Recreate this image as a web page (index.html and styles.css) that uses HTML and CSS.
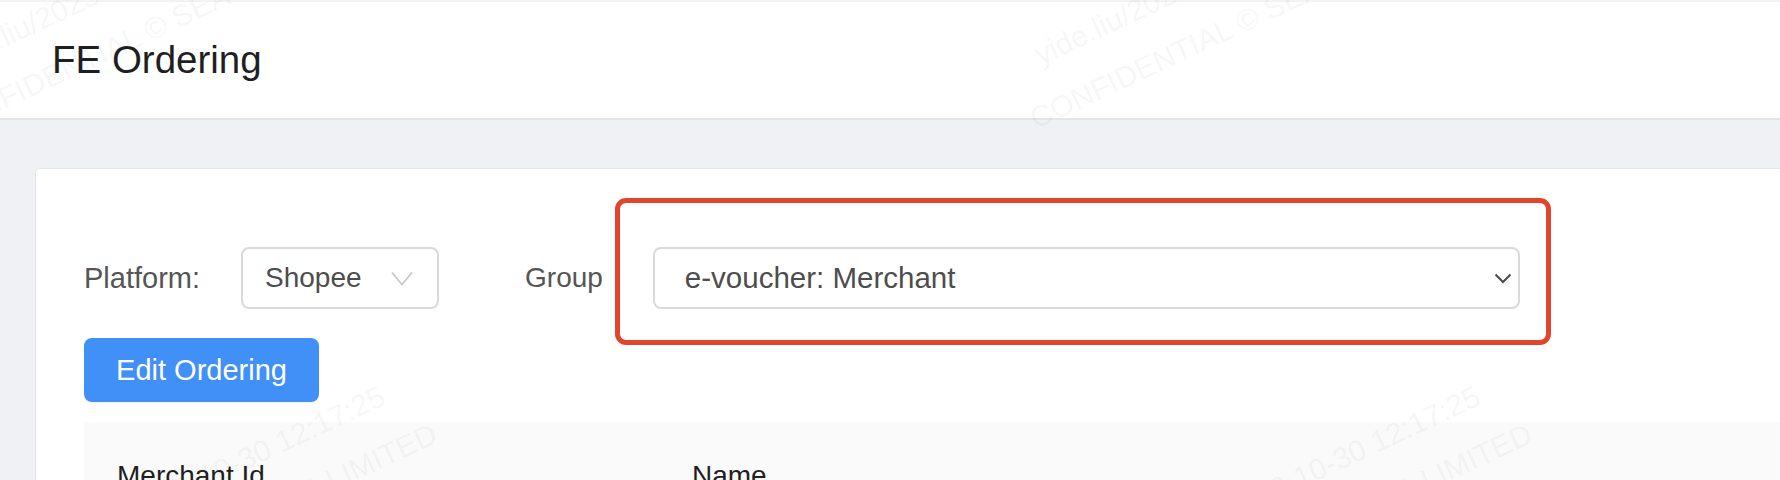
FILE: index.html
```html
<!DOCTYPE html>
<html lang="en">
<head>
  <meta charset="UTF-8" />
  <title>FE Ordering</title>
  <link rel="stylesheet" href="styles.css">
</head>
<body>
  <div class="header">
    <h1>FE Ordering</h1>
  </div>
  <div class="main">
    <div class="card">
      <div class="filters">
        <label class="filter-label">Platform:</label>
        <div class="select select-small">
          <span>Shopee</span>
          <svg class="arrow-light" width="22" height="15" viewBox="0 0 22 15"><path d="M1 1.5 L11 13.5 L21 1.5" fill="none" stroke="#c4c4c4" stroke-width="1.6"/></svg>
        </div>
        <label class="filter-label group-label">Group</label>
        <div class="group-field">
          <div class="select select-wide">
            <span>e-voucher: Merchant</span>
            <svg class="arrow-dark" width="18" height="11" viewBox="0 0 18 11"><path d="M1.5 1.5 L9 9 L16.5 1.5" fill="none" stroke="#4a4a4a" stroke-width="2"/></svg>
          </div>
          <div class="highlight"></div>
        </div>
      </div>
      <button class="btn-primary">Edit Ordering</button>
      <table class="list">
        <thead>
          <tr>
            <th class="col-id">Merchant Id</th>
            <th>Name</th>
          </tr>
        </thead>
      </table>
    </div>
  </div>

  <div class="watermarks">
    <div class="wm wm-1">yide.liu/2023-10-30 12:17:25<br>CONFIDENTIAL © SEA LIMITED</div>
    <div class="wm wm-2">yide.liu/2023-10-30 12:17:25<br>CONFIDENTIAL © SEA LIMITED</div>
    <div class="wm wm-3">yide.liu/2023-10-30 12:17:25<br>CONFIDENTIAL © SEA LIMITED</div>
    <div class="wm wm-4">yide.liu/2023-10-30 12:17:25<br>CONFIDENTIAL © SEA LIMITED</div>
  </div>
</body>
</html>
```

FILE: styles.css
```css
body {
  margin: 0;
  font-family: "Liberation Sans", Arial, sans-serif;
  background-color: #f0f1f4;
  overflow: hidden;
  height: 480px;
  position: relative;
}
.header {
  height: 116px;
  background-color: #fff;
  border-top: 2px solid #f3f3f3;
  border-bottom: 2px solid #e4e5e7;
  display: flex;
  align-items: center;
  padding-left: 52px;
}
.header h1 {
  margin: 0;
  font-size: 38.5px;
  font-weight: normal;
  color: #1f1f1f;
}
.main {
  padding: 48px 0 0 35px;
}
.card {
  width: 1800px;
  background-color: #fff;
  border: 1px solid #e6e7e9;
  border-radius: 5px;
  padding: 78px 0 40px 48px;
}
.filters {
  display: flex;
  align-items: center;
  height: 62px;
}
.filter-label {
  font-size: 29px;
  color: #555;
  margin-right: 41px;
}
.group-label {
  font-size: 28px;
  margin-left: 86px;
  margin-right: 50px;
}
.select {
  box-sizing: border-box;
  height: 62px;
  border: 2px solid #dadada;
  border-radius: 8px;
  display: flex;
  align-items: center;
  justify-content: space-between;
  color: #4d4d4d;
}
.select-small {
  width: 198px;
  padding: 0 24px 0 22px;
  font-size: 28px;
}
.select-wide {
  width: 867px;
  padding: 0 6px 0 30px;
  font-size: 29.5px;
}
.group-field {
  position: relative;
}
.highlight {
  position: absolute;
  left: -38px;
  right: -31px;
  top: -49px;
  bottom: -36px;
  border: 5px solid #e4432c;
  border-radius: 11px;
}
.btn-primary {
  margin-top: 29px;
  width: 235px;
  height: 64px;
  border: none;
  border-radius: 8px;
  background-color: #4090f7;
  color: #fff;
  font-family: inherit;
  font-size: 29px;
  padding: 0;
  box-shadow: 0 2px 0 rgba(0, 0, 0, 0.03);
}
.list {
  margin-top: 20px;
  width: 100%;
  border-collapse: collapse;
}
.list th {
  background-color: #fafafa;
  text-align: left;
  font-size: 28px;
  font-weight: 500;
  line-height: 44px;
  color: #1f1f1f;
  padding: 32px 33px;
}
.list .col-id {
  width: 509px;
}
.watermarks {
  position: absolute;
  inset: 0;
  pointer-events: none;
  overflow: hidden;
}
.wm {
  position: absolute;
  width: 470px;
  text-align: center;
  font-size: 30px;
  line-height: 56px;
  color: rgba(0, 0, 0, 0.055);
  transform-origin: 0 0;
  transform: rotate(-25deg);
  white-space: nowrap;
}
.wm-1 { left: -108px; top: 58px; }
.wm-2 { left: 984px; top: 50px; }
.wm-3 { left: -14px; top: 549px; }
.wm-4 { left: 1081px; top: 549px; }
```
